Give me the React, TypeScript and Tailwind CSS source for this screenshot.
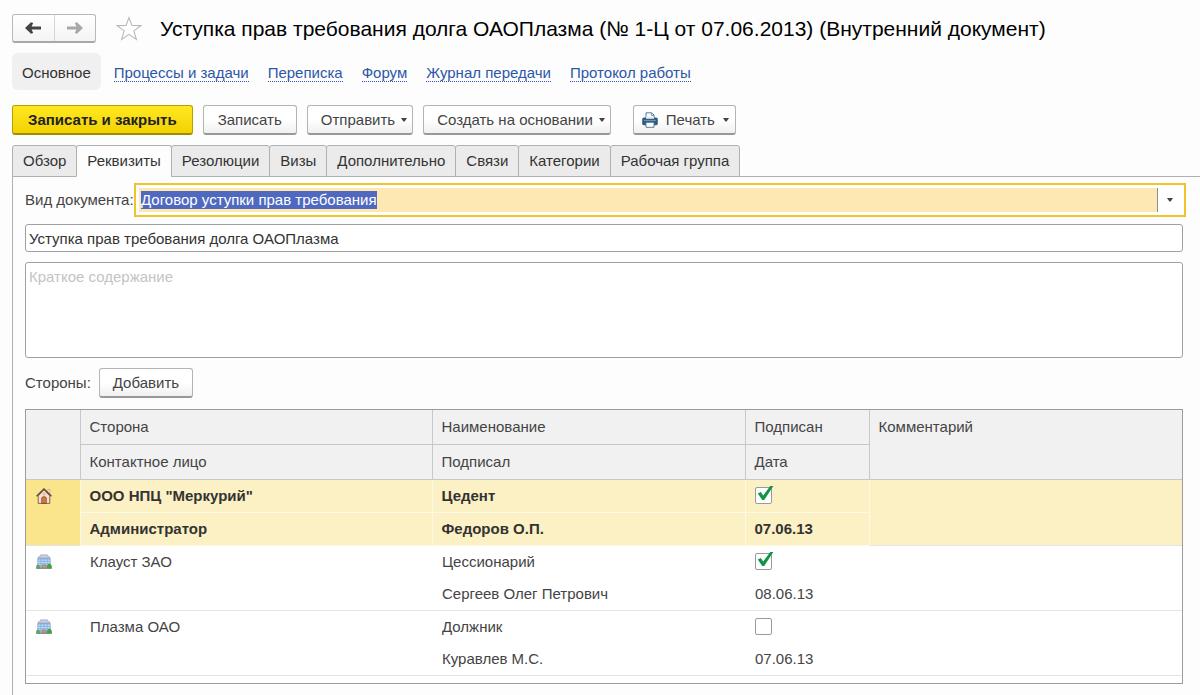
import React, { useEffect, useRef, useState } from 'react';

const links = ['Процессы и задачи', 'Переписка', 'Форум', 'Журнал передачи', 'Протокол работы'];

const tabs = ['Обзор', 'Реквизиты', 'Резолюции', 'Визы', 'Дополнительно', 'Связи', 'Категории', 'Рабочая группа'];

const parties = [
    { icon: 'home', side: 'ООО НПЦ "Меркурий"', contact: 'Администратор', role: 'Цедент', signer: 'Федоров О.П.', signed: true, date: '07.06.13' },
    { icon: 'company', side: 'Клауст ЗАО', contact: '', role: 'Цессионарий', signer: 'Сергеев Олег Петрович', signed: true, date: '08.06.13' },
    { icon: 'company', side: 'Плазма ОАО', contact: '', role: 'Должник', signer: 'Куравлев М.С.', signed: false, date: '07.06.13' },
];

const buttonClass =
    'flex h-[30px] items-center rounded-[3px] border border-[#b4b4b4] border-b-2 border-b-[#989898] bg-linear-to-b from-white from-50% to-[#f0f0f0] text-[#444444]';

function ArrowIcon({ className }: { className: string }) {
    return (
        <svg viewBox="0 0 16 12" className={className} fill="currentColor">
            <path d="M0 6 6 0.3 8.2 0.9 6.6 4.5H16V7.5H6.6L8.2 11.1 6 11.7Z" />
        </svg>
    );
}

function Caret() {
    return (
        <svg viewBox="0 0 6 4" className="h-1 w-1.5" fill="#444444">
            <path d="M0 0H6L3.6 3.5H2.4Z" />
        </svg>
    );
}

function PrinterIcon() {
    return (
        <svg viewBox="0 0 16 16" className="h-4 w-4">
            <path d="M4 6.5V0.8h5.6L12 3v3.5" fill="#fff" stroke="#5b7c98" />
            <path d="M9.4 1v2.4H12" fill="none" stroke="#5b7c98" strokeWidth="0.8" />
            <rect x="0.2" y="5.4" width="15.6" height="7.8" rx="1.6" fill="#2f5b80" />
            <path d="M4 4.8h8v2H4z" fill="#dfe8ef" />
            <path d="M2 8.4h12" stroke="#7fa3bf" strokeWidth="0.9" />
            <path d="M4 10.3h8v5H4z" fill="#fff" stroke="#5b7c98" />
        </svg>
    );
}

function HomeIcon() {
    return (
        <svg viewBox="0 0 16 16" className="h-4 w-4">
            <path d="M11.8 1.5H14v4h-2.2z" fill="#f6ead2" stroke="#b59a78" strokeWidth="0.6" />
            <path d="M2.2 8 8 1.8 13.8 8v7.4H2.2z" fill="#f9e0cb" stroke="#7d5445" strokeWidth="0.9" />
            <path d="M0.5 8.2 8 0.8l7.5 7.4" fill="none" stroke="#63473c" strokeWidth="1.2" />
            <circle cx="8" cy="5.8" r="1.2" fill="#fff" stroke="#a98470" strokeWidth="0.6" />
            <path d="M5.8 15.4V10q0-1.2 2.2-1.2T10.2 10v5.4z" fill="#dc8a4a" stroke="#80432a" strokeWidth="0.9" />
            <path d="M8 9.5v5.6" stroke="#a5532a" strokeWidth="0.6" />
        </svg>
    );
}

function CompanyIcon() {
    return (
        <svg viewBox="0 0 16 16" className="h-4 w-4">
            <path d="M4.6 0.8h6.8v1.6h2v2H2.6v-2h2z" fill="#c9cde0" stroke="#9aa1ba" strokeWidth="0.6" />
            <path d="M1.8 4.2h12.4v9.6H1.8z" fill="#8fbde6" stroke="#8798b8" strokeWidth="0.7" />
            <path d="M2.2 6.2h11.6M2.2 8.6h11.6M2.2 11h11.6" stroke="#c6e3f8" strokeWidth="1" />
            <path d="M4.8 4.4v9M8 4.4v7M11.2 4.4v9" stroke="#6e9fd2" strokeWidth="0.5" />
            <path d="M6 11h4v3H6z" fill="#c39a80" stroke="#8d6a55" strokeWidth="0.5" />
            <path d="M0.2 14.4c-.3-2.2.4-4 1.7-4 1.4 0 2.5 1.8 2.2 4z" fill="#5ea45a" />
            <path d="M11 14.4c-.5-2.8.8-4.6 2.4-4.6s2.8 1.9 2.4 4.6z" fill="#43a04a" />
            <path d="M0.3 14.5h15.4" stroke="#7c8c7c" strokeWidth="0.9" />
        </svg>
    );
}

function SignedBox({ checked, label, onChange }: { checked: boolean; label: string; onChange: () => void }) {
    return (
        <span className="relative block h-[17px] w-[17px]">
            <input
                type="checkbox"
                aria-label={label}
                checked={checked}
                onChange={onChange}
                className="block h-[17px] w-[17px] appearance-none rounded-[2px] border border-[#9a9a9a] bg-white"
            />
            {checked && (
                <svg viewBox="0 0 17 17" className="pointer-events-none absolute inset-0 h-[17px] w-[17px] overflow-visible">
                    <path d="M2.8 6.4 5.8 5 8.2 8.4 15.2 -1 18.4 -1 9.2 13 7.2 13Z" fill="#149447" />
                </svg>
            )}
        </span>
    );
}

export default function App() {
    const [activeTab, setActiveTab] = useState('Реквизиты');
    const [selected, setSelected] = useState(0);
    const [signed, setSigned] = useState(parties.map((p) => p.signed));
    const kindRef = useRef<HTMLInputElement>(null);

    useEffect(() => {
        kindRef.current?.focus();
        kindRef.current?.select();
    }, []);

    const headCell = 'border border-t-0 border-[#c8c8c8] bg-[#f1f1f1] px-[9px] text-left align-top font-normal leading-[33px]';

    return (
        <div className="flex min-h-screen flex-col bg-[#fdfdfd] pl-3 font-['Liberation_Sans',Arial,sans-serif] text-[15px] leading-[18px] text-[#444444]">
            <header className="flex h-[53px] items-center pt-[3px]">
                <div className="flex h-[29px] w-[84px] rounded-[3px] border border-[#b8b8b8] border-b-2 border-b-[#a8a8a8] bg-linear-to-b from-white to-[#f4f4f4]">
                    <button aria-label="Назад" className="flex flex-1 items-center justify-center border-r border-[#d5d5d5] text-[#444444]">
                        <ArrowIcon className="h-3 w-4" />
                    </button>
                    <button aria-label="Вперед" className="flex flex-1 items-center justify-center text-[#a8a8a8]">
                        <ArrowIcon className="h-3 w-4 rotate-180" />
                    </button>
                </div>
                <button aria-label="Избранное" className="ml-5">
                    <svg viewBox="0 0 26 25" className="h-[25px] w-[26px]" fill="#fff" stroke="#b8b8b8" strokeWidth="1.1">
                        <path d="M13 1.6 15.9 9.4 24.8 9.6 17.8 14.9 20.4 23.4 13 18.3 5.6 23.4 8.2 14.9 1.2 9.6 10.1 9.4Z" />
                    </svg>
                </button>
                <h1 className="ml-[18px] whitespace-nowrap pt-0.5 text-[21px] leading-7 text-black">
                    Уступка прав требования долга ОАОПлазма (№ 1-Ц от 07.06.2013) (Внутренний документ)
                </h1>
            </header>

            <nav className="flex h-[37px] items-center gap-[19px]">
                <a href="#main" className="-mr-1.5 flex h-full items-center rounded-md bg-[#f0f0f0] px-[10px] pt-0.5 text-[#333333]">
                    Основное
                </a>
                {links.map((link) => (
                    <a key={link} href="#section" className="mt-[3px] border-b border-dotted border-[#2b57a7] leading-4 text-[#2b57a7]">
                        {link}
                    </a>
                ))}
            </nav>

            <div className="mt-[15px] flex">
                <button className="flex h-[30px] items-center rounded-[3px] border border-[#b5a000] border-b-2 border-b-[#a08c00] bg-linear-to-b from-[#ffe81f] to-[#f2d200] px-[15px] font-bold text-[#222222]">
                    Записать и закрыть
                </button>
                <button className={`${buttonClass} ml-2.5 px-[14px]`}>Записать</button>
                <button className={`${buttonClass} ml-2.5 gap-1.5 pl-[13px] pr-[5px]`}>
                    Отправить
                    <Caret />
                </button>
                <button className={`${buttonClass} ml-2.5 gap-1.5 pl-[13px] pr-[5px]`}>
                    Создать на основании
                    <Caret />
                </button>
                <button className={`${buttonClass} ml-[22px] gap-2 pl-2 pr-1.5`}>
                    <PrinterIcon />
                    Печать
                    <Caret />
                </button>
            </div>

            <div role="tablist" className="mt-[10px] flex h-8 border-b border-[#b0b0b0]">
                {tabs.map((tab) => (
                    <button
                        key={tab}
                        role="tab"
                        aria-selected={tab === activeTab}
                        onClick={() => setActiveTab(tab)}
                        className={`-mr-px h-8 rounded-t-[3px] border border-[#b0b0b0] px-[10px] text-[#333333] ${
                            tab === activeTab ? 'border-b-[#fdfdfd] bg-[#fdfdfd]' : 'bg-[#ebebeb]'
                        }`}
                    >
                        {tab}
                    </button>
                ))}
            </div>

            <main className="flex-1 border-l border-[#b0b0b0] pl-3 pr-[17px] pt-1.5">
                <div className="-mr-[3px] flex items-center">
                    <label htmlFor="kind" className="w-[109px] shrink-0 whitespace-nowrap">
                        Вид документа:
                    </label>
                    <div className="flex h-[34px] flex-1 border-2 border-[#f0c52c] bg-white p-[3px]">
                        <input
                            id="kind"
                            ref={kindRef}
                            defaultValue="Договор уступки прав требования"
                            className="min-w-0 flex-1 bg-[#fde8b4] pl-0.5 text-[#333333] outline-none selection:bg-[#4f69c0] selection:text-white"
                        />
                        <button aria-label="Выбрать вид документа" className="flex w-6 items-center justify-center border-l border-[#909090]">
                            <Caret />
                        </button>
                    </div>
                </div>
                <input
                    aria-label="Наименование документа"
                    defaultValue="Уступка прав требования долга ОАОПлазма"
                    className="mt-[7px] block h-7 w-full rounded-[3px] border border-[#a0a0a0] bg-white px-[3px] text-[#333333]"
                />
                <textarea
                    aria-label="Краткое содержание"
                    placeholder="Краткое содержание"
                    className="mt-[10px] block h-24 w-full resize-none rounded-[3px] border border-[#a0a0a0] bg-white px-[3px] py-[5px] placeholder:text-[#c4c4c4]"
                />
                <div className="mt-[10px] flex items-center gap-2">
                    <span>Стороны:</span>
                    <button className={`${buttonClass} px-[13px]`}>Добавить</button>
                </div>

                <div className="mt-[11px] border border-[#9c9c9c] bg-white pb-[7px]">
                    <table className="w-full table-fixed border-collapse">
                        <colgroup>
                            <col className="w-[54px]" />
                            <col className="w-[352px]" />
                            <col className="w-[313px]" />
                            <col className="w-[124px]" />
                            <col />
                        </colgroup>
                        <thead>
                            <tr className="h-[34px]">
                                <td rowSpan={2} className={`${headCell} border-l-0`} />
                                <th className={headCell}>Сторона</th>
                                <th className={headCell}>Наименование</th>
                                <th className={headCell}>Подписан</th>
                                <th rowSpan={2} className={`${headCell} border-r-0`}>
                                    Комментарий
                                </th>
                            </tr>
                            <tr className="h-[35px]">
                                <th className={headCell}>Контактное лицо</th>
                                <th className={headCell}>Подписал</th>
                                <th className={headCell}>Дата</th>
                            </tr>
                        </thead>
                        {parties.map((p, i) => {
                            const active = i === selected;
                            const cell = active
                                ? 'border border-[#fef9e6] bg-[#fcf0c5] px-[9px] text-[#333333]'
                                : 'px-[10px]';
                            return (
                                <tbody
                                    key={p.side}
                                    onClick={() => setSelected(i)}
                                    className={active ? 'border-b border-[#e4e4e4] font-bold' : 'border-b border-[#e4e4e4]'}
                                >
                                    <tr className="h-[33px]">
                                        <td rowSpan={2} className={`pl-[10px] pt-2 align-top ${active ? 'bg-[#fbe58c]' : ''}`}>
                                            {p.icon === 'home' ? <HomeIcon /> : <CompanyIcon />}
                                        </td>
                                        <td className={cell}>{p.side}</td>
                                        <td className={cell}>{p.role}</td>
                                        <td className={cell}>
                                            <SignedBox
                                                checked={signed[i]}
                                                label={`Подписан: ${p.side}`}
                                                onChange={() => setSigned(signed.map((s, k) => (k === i ? !s : s)))}
                                            />
                                        </td>
                                        <td rowSpan={2} className={active ? 'border-l border-[#fef9e6] bg-[#fcf0c5]' : ''} />
                                    </tr>
                                    <tr className={active ? 'h-[33px]' : 'h-8'}>
                                        <td className={cell}>{p.contact}</td>
                                        <td className={cell}>{p.signer}</td>
                                        <td className={cell}>{p.date}</td>
                                    </tr>
                                </tbody>
                            );
                        })}
                    </table>
                </div>
            </main>
        </div>
    );
}
